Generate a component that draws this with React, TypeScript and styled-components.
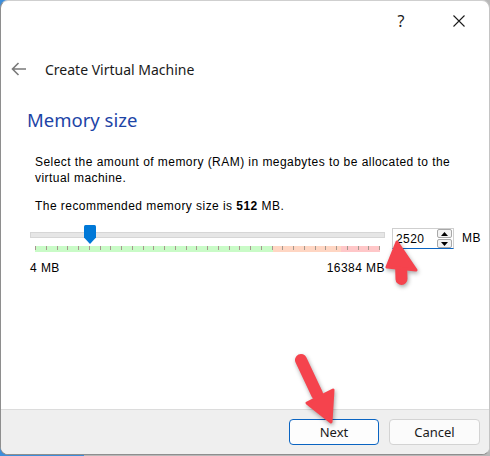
import React from "react";
import styled, { createGlobalStyle } from "styled-components";

const Global = createGlobalStyle`
  html, body { margin: 0; padding: 0; width: 490px; height: 456px; overflow: hidden; }
  body {
    background: linear-gradient(to right, #3d8edb 0 84px, #b8b8b8 84px);
    font-family: "Noto Sans", "Open Sans", sans-serif;
  }
`;

const Window = styled.div`
  position: relative;
  box-sizing: border-box;
  width: 490px;
  height: 455px;
  background: #ffffff;
  border: 1px solid #8e8e8e;
  border-top-color: #cfcfcf;
  border-right-color: #c4c4c4;
  border-radius: 8px;
  overflow: hidden;
  display: flex;
  flex-direction: column;
`;

const TitleBar = styled.div`
  height: 40px;
  display: flex;
  justify-content: flex-end;
  align-items: center;
  gap: 12px;
  padding-right: 7px;
`;

const CaptionButton = styled.div`
  width: 46px;
  height: 40px;
  display: flex;
  align-items: center;
  justify-content: center;
  font-family: "Noto Sans", sans-serif;
  font-size: 16px;
  color: #1b1b1b;
`;

const Header = styled.div`
  margin-top: 14px;
  height: 28px;
  display: flex;
  align-items: center;
  padding-left: 9px;
`;

const BackButton = styled.div`
  width: 18px;
  height: 18px;
  display: flex;
  align-items: center;
  justify-content: center;
  margin-right: 17px;
`;

const HeaderTitle = styled.div`
  font-family: "Noto Sans", sans-serif;
  font-size: 14px;
  color: #1a1a1a;
`;

const Content = styled.div`
  padding-left: 26px;
`;

const Heading = styled.div`
  margin-top: 24px;
  height: 26px;
  line-height: 26px;
  font-family: "Noto Sans", sans-serif;
  font-size: 18.5px;
  color: #1d44a6;
`;

const Section = styled.div`
  padding-left: 3px;
  font-family: "Liberation Sans", Arial, sans-serif;
  font-size: 12px;
  letter-spacing: 0.45px;
  color: #000;
`;

const Paragraph = styled.p<{ $gap: number }>`
  margin: ${(p) => p.$gap}px 0 0;
  padding-left: 5px;
  line-height: 16px;
  width: 425px;
`;

const SliderRow = styled.div`
  margin-top: 11px;
  display: flex;
  align-items: flex-start;
`;

const SliderArea = styled.div`
  width: 355px;
  display: flex;
  flex-direction: column;
`;

const Track = styled.div`
  position: relative;
  height: 20px;
  display: flex;
  align-items: center;
`;

const Groove = styled.div`
  flex: 1;
  height: 4px;
  background: #e6e6e6;
  border: 1px solid #d6d6d6;
`;

const Thumb = styled.svg`
  position: absolute;
  top: 0;
  width: 12px;
  height: 19px;
`;

const TickBar = styled.div`
  margin: 1px 5px 0;
  height: 6px;
  background: linear-gradient(
    to right,
    #c9fbc7 0 69%,
    #ffd6c3 69% 88.7%,
    #ffc7c8 88.7% 100%
  );
  display: flex;
  justify-content: space-between;
  align-items: flex-start;
`;

const Tick = styled.span`
  width: 1px;
  height: 4px;
  background: #a6978d;
`;

const SpinBox = styled.div`
  margin-left: 7px;
  margin-top: 3px;
  box-sizing: border-box;
  width: 62px;
  height: 21px;
  border: 1px solid #cfcfcf;
  border-bottom: 1px solid #0a64c2;
  display: flex;
  align-items: center;
  padding-left: 3px;
  padding-right: 1px;
`;

const SpinValue = styled.div`
  flex: 1;
`;

const SpinButtons = styled.div`
  display: flex;
  flex-direction: column;
  gap: 1px;
`;

const SpinButton = styled.div`
  box-sizing: border-box;
  width: 15px;
  height: 9px;
  border: 1px solid #a8a8a8;
  border-radius: 2px;
  background: #f3f3f3;
  display: flex;
  align-items: center;
  justify-content: center;
`;

const Unit = styled.div`
  margin-left: 8px;
  margin-top: 3px;
  height: 21px;
  line-height: 21px;
`;

const Labels = styled.div`
  width: 355px;
  margin-top: 8px;
  display: flex;
  justify-content: space-between;
  line-height: 16px;
`;

const Footer = styled.div`
  margin-top: auto;
  height: 45px;
  box-sizing: border-box;
  border-top: 1px solid #dcdcdc;
  background: #efefef;
  display: flex;
  justify-content: flex-end;
  align-items: flex-start;
  gap: 10px;
  padding: 9px 9px 0 0;
`;

const Button = styled.div<{ $primary?: boolean }>`
  box-sizing: border-box;
  width: ${(p) => (p.$primary ? 90 : 91)}px;
  height: 26px;
  border-radius: 4px;
  border: 1px solid ${(p) => (p.$primary ? "#0a64c2" : "#d3d3d3")};
  background: ${(p) => (p.$primary ? "#fdfdfd" : "#fbfbfb")};
  display: flex;
  align-items: center;
  justify-content: center;
  font-family: "Noto Sans", sans-serif;
  font-size: 13px;
  color: #1a1a1a;
`;

const Annotations = styled.svg`
  position: absolute;
  left: -1px;
  top: -1px;
  width: 490px;
  height: 456px;
  pointer-events: none;
  filter: drop-shadow(1px 2px 2px rgba(0, 0, 0, 0.35));
`;

const ARROW = "#f5434d";

export default function App() {
  const ticks = Array.from({ length: 33 });
  const thumbLeft = 5 + (2520 / 16384) * 345 - 4.5;
  return (
    <>
      <Global />
      <Window>
        <TitleBar>
          <CaptionButton>?</CaptionButton>
          <CaptionButton>
            <svg width="12" height="12" viewBox="0 0 12 12">
              <path d="M0.5 0.5 L11.5 11.5 M11.5 0.5 L0.5 11.5" stroke="#1b1b1b" strokeWidth="1.1" />
            </svg>
          </CaptionButton>
        </TitleBar>
        <Header>
          <BackButton>
            <svg width="16" height="14" viewBox="0 0 16 14">
              <path d="M15 7 H1.5 M7.5 1 L1.5 7 L7.5 13" stroke="#7a7a7a" strokeWidth="1.6" fill="none" />
            </svg>
          </BackButton>
          <HeaderTitle>Create Virtual Machine</HeaderTitle>
        </Header>
        <Content>
          <Heading>Memory size</Heading>
          <Section>
            <Paragraph $gap={21}>
              Select the amount of memory (RAM) in megabytes to be allocated to the virtual machine.
            </Paragraph>
            <Paragraph $gap={12}>
              The recommended memory size is <b>512</b> MB.
            </Paragraph>
            <SliderRow>
              <SliderArea>
                <Track>
                  <Groove />
                  <Thumb viewBox="0 0 12 19" style={{ left: thumbLeft }}>
                    <path d="M1.5 0 H10.5 Q12 0 12 1.5 V12.5 L6 19 L0 12.5 V1.5 Q0 0 1.5 0 Z" fill="#0078d7" />
                  </Thumb>
                </Track>
                <TickBar>
                  {ticks.map((_, i) => (
                    <Tick key={i} />
                  ))}
                </TickBar>
              </SliderArea>
              <SpinBox>
                <SpinValue>2520</SpinValue>
                <SpinButtons>
                  <SpinButton>
                    <svg width="7" height="4" viewBox="0 0 7 4">
                      <path d="M3.5 0 L7 4 H0 Z" fill="#000" />
                    </svg>
                  </SpinButton>
                  <SpinButton>
                    <svg width="7" height="4" viewBox="0 0 7 4">
                      <path d="M0 0 H7 L3.5 4 Z" fill="#000" />
                    </svg>
                  </SpinButton>
                </SpinButtons>
              </SpinBox>
              <Unit>MB</Unit>
            </SliderRow>
            <Labels>
              <span>4 MB</span>
              <span>16384 MB</span>
            </Labels>
          </Section>
        </Content>
        <Footer>
          <Button $primary>Next</Button>
          <Button>Cancel</Button>
        </Footer>
        <Annotations viewBox="0 0 490 456">
          <g fill={ARROW} stroke={ARROW} strokeLinejoin="round">
            <line x1="401.5" y1="279" x2="401" y2="262" strokeWidth="12" strokeLinecap="round" />
            <polygon points="397,242 387,267 416,270" strokeWidth="3" />
            <line x1="301" y1="360" x2="317" y2="394" strokeWidth="12" strokeLinecap="round" />
            <polygon points="331,422 307,403 333,390" strokeWidth="3" />
          </g>
        </Annotations>
      </Window>
    </>
  );
}
